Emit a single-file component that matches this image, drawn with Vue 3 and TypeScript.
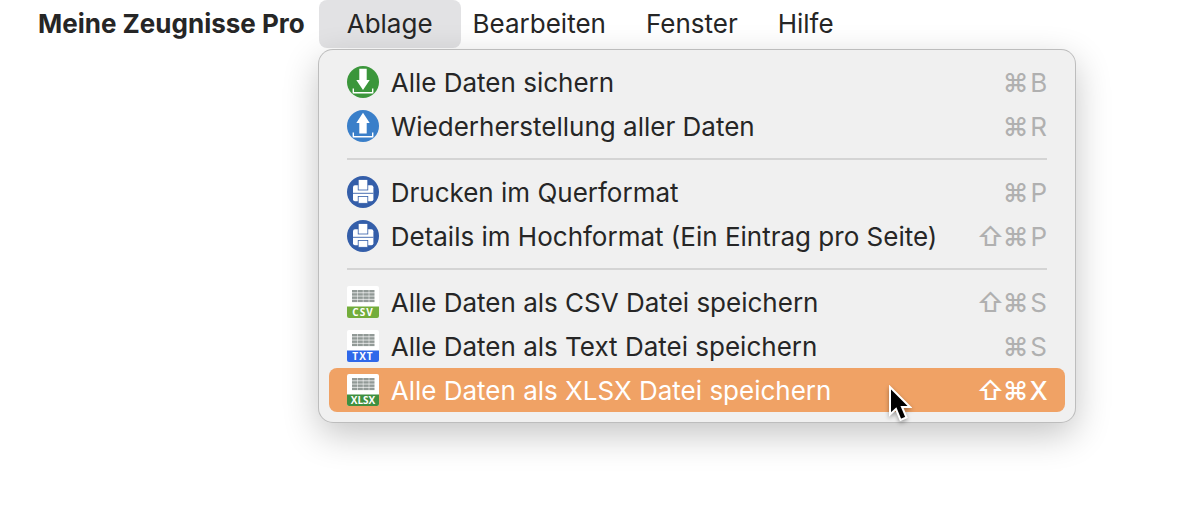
<script setup lang="ts">
type Icon = 'download' | 'upload' | 'print' | 'sheet'

interface MenuItem {
  label: string
  keys: string[]
  icon: Icon
  tag?: string
  color: string
  active?: boolean
}

const groups: MenuItem[][] = [
  [
    { label: 'Alle Daten sichern', keys: ['⌘', 'B'], icon: 'download', color: '#3b963b' },
    { label: 'Wiederherstellung aller Daten', keys: ['⌘', 'R'], icon: 'upload', color: '#3a7fc9' },
  ],
  [
    { label: 'Drucken im Querformat', keys: ['⌘', 'P'], icon: 'print', color: '#345ea9' },
    { label: 'Details im Hochformat (Ein Eintrag pro Seite)', keys: ['⇧', '⌘', 'P'], icon: 'print', color: '#345ea9' },
  ],
  [
    { label: 'Alle Daten als CSV Datei speichern', keys: ['⇧', '⌘', 'S'], icon: 'sheet', tag: 'CSV', color: '#73ad3b' },
    { label: 'Alle Daten als Text Datei speichern', keys: ['⌘', 'S'], icon: 'sheet', tag: 'TXT', color: '#2f68ea' },
    { label: 'Alle Daten als XLSX Datei speichern', keys: ['⇧', '⌘', 'X'], icon: 'sheet', tag: 'XLSX', color: '#3f9040', active: true },
  ],
]
const others = ['Bearbeiten', 'Fenster', 'Hilfe']
const rows = [4, 7.2, 10.4, 13.6]
</script>

<template>
  <main class="desktop">
    <nav class="bar">
      <button class="title app" type="button">Meine Zeugnisse Pro</button>
      <div class="anchor">
        <button class="title open" type="button" aria-expanded="true">Ablage</button>
        <div class="menu" role="menu">
          <div v-for="(group, g) in groups" :key="g" class="group">
            <button
              v-for="item in group"
              :key="item.label"
              class="item"
              :class="{ active: item.active }"
              type="button"
              role="menuitem"
            >
              <svg class="icon" viewBox="0 0 32 32" aria-hidden="true">
                <template v-if="item.icon === 'sheet'">
                  <rect width="32" height="32" rx="2" fill="#fff" />
                  <path d="M0 20.500H32V30a2 2 0 0 1-2 2H2a2 2 0 0 1-2-2Z" :fill="item.color" />
                  <rect v-for="y in rows" :key="y" x="5" :y="y" width="22.500" height="2.500" fill="#929a97" />
                  <path d="M10.500 4V17M16.200 4V17M22 4V17" stroke="#fff" stroke-width=".5" />
                  <text class="tag" :class="{ long: item.tag === 'XLSX' }" x="16" y="30" text-anchor="middle">{{ item.tag }}</text>
                </template>
                <template v-else>
                  <circle cx="16" cy="16" r="16" :fill="item.color" />
                  <path
                    v-if="item.icon === 'download'"
                    d="M12.300 2.800h7.400v11.200h3L16 24 9.300 14h3Z"
                    fill="#fff"
                  />
                  <path
                    v-else-if="item.icon === 'upload'"
                    d="M16 2.800l6.700 10.200h-3v10.500h-7.400V13h-3Z"
                    fill="#fff"
                  />
                  <path
                    v-if="item.icon !== 'print'"
                    d="M6.300 22.500v4.200h19.400v-4.200"
                    fill="none"
                    stroke="#fff"
                    stroke-width="1.400"
                  />
                  <template v-else>
                    <rect x="6" y="9.200" width="20.400" height="16" rx="2" fill="#fff" />
                    <path d="M6 17.300H26.400" :stroke="item.color" stroke-width=".9" />
                    <rect x="11.200" y="3.500" width="9.600" height="10.500" fill="#fff" :stroke="item.color" stroke-width=".8" />
                    <rect x="11.200" y="20.500" width="9.600" height="6.800" fill="#fff" :stroke="item.color" stroke-width=".8" />
                  </template>
                </template>
              </svg>
              <span class="label">{{ item.label }}</span>
              <span class="keys">
                <kbd v-for="key in item.keys" :key="key" :class="{ symbol: key === '⌘' || key === '⇧' }">{{ key }}</kbd>
              </span>
            </button>
          </div>
          <svg class="pointer" viewBox="0 0 24 38" aria-hidden="true">
            <path d="M2 2V29.500L8 24 12.500 35 18.500 32.500 14 22H22Z" fill="#000" stroke="#fff" stroke-width="2" />
          </svg>
        </div>
      </div>
      <button v-for="name in others" :key="name" class="title" type="button">{{ name }}</button>
    </nav>
  </main>
</template>

<style>
body {
  background: #fff;
}
</style>

<style scoped>
.desktop {
  min-height: 100vh;
}
.bar {
  display: flex;
  height: 48px;
  padding-left: 18px;
  font-family: Inter, "Liberation Sans", sans-serif;
  font-size: 26px;
  line-height: 48px;
  color: #262626;
}
button {
  border: 0;
  margin: 0;
  background: none;
  font: inherit;
  color: inherit;
  white-space: nowrap;
}
.title {
  padding: 0 20px;
}
.app {
  padding-right: 22px;
  font-weight: 700;
}
.anchor {
  position: relative;
  margin: 0 -8px;
}
.open {
  padding: 0 28px;
  border-radius: 8px;
  background: #e2e2e4;
}
.menu {
  position: absolute;
  top: 50px;
  left: 0;
  box-sizing: border-box;
  width: 63vw;
  padding: 10px;
  border-radius: 14px;
  background: #f0f0f0;
  box-shadow: 0 0 0 1px #bdbdbd, 0 12px 36px rgba(0, 0, 0, 0.24);
}
.group + .group::before {
  content: "";
  display: block;
  height: 2px;
  margin: 10px 18px;
  background: #d4d4d4;
}
.item {
  display: flex;
  align-items: center;
  width: 100%;
  height: 44px;
  padding: 0 16px 0 18px;
  border-radius: 8px;
  line-height: 42px;
  text-align: left;
}
.icon {
  flex: none;
  width: 32px;
  height: 32px;
  margin-right: 12px;
}
.tag {
  font: 700 10px "Open Sans", sans-serif;
  letter-spacing: 1px;
  fill: #fff;
}
.long {
  letter-spacing: 0;
}
.label {
  flex: 1;
  padding-top: 2px;
}
.keys {
  display: flex;
  padding-top: 2px;
  color: #b0b0b0;
}
kbd {
  width: 20px;
  font: inherit;
  text-align: center;
}
.symbol {
  width: 26px;
  font-weight: 500;
}
.active {
  background: #f0a265;
  color: #fff;
}
.active kbd {
  color: #fff;
  font-weight: 500;
}
.pointer {
  position: absolute;
  left: 569px;
  bottom: -1px;
  width: 24px;
  height: 38px;
  filter: drop-shadow(0 2px 2px rgba(0, 0, 0, 0.35));
}
</style>
